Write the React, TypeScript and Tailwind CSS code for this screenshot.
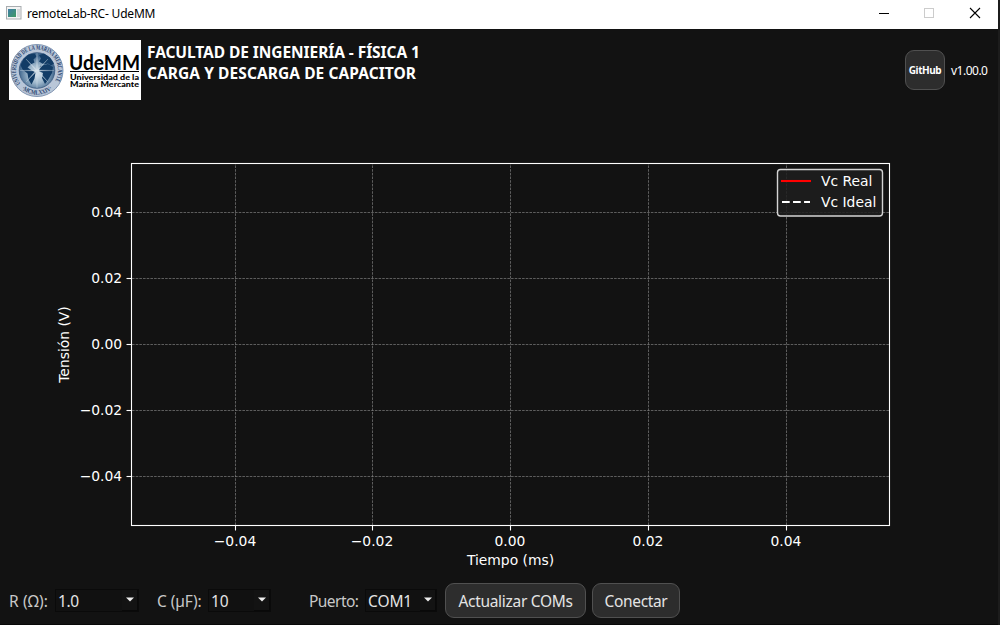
import React from "react";

const xTicks = [
  { at: 235.5, label: "−0.04" },
  { at: 372.5, label: "−0.02" },
  { at: 510.5, label: "0.00" },
  { at: 648.5, label: "0.02" },
  { at: 786.5, label: "0.04" },
];

const yTicks = [
  { at: 212.5, label: "0.04" },
  { at: 278.5, label: "0.02" },
  { at: 344.5, label: "0.00" },
  { at: 410.5, label: "−0.02" },
  { at: 476.5, label: "−0.04" },
];

function TitleBar() {
  return (
    <header className="flex h-[29px] w-[998px] shrink-0 items-center bg-white text-black">
      <svg width="16" height="14" viewBox="0 0 16 14" className="ml-[6px] -mt-[3px]">
        <defs>
          <linearGradient id="appIcon" x1="0" y1="0" x2="1" y2="1">
            <stop offset="0" stopColor="#3f7ea8" />
            <stop offset="1" stopColor="#3f9a62" />
          </linearGradient>
        </defs>
        <rect x="0.5" y="0.5" width="14.5" height="12.5" fill="#f4f4f4" stroke="#a9adb0" />
        <rect x="2" y="3" width="8" height="8" fill="url(#appIcon)" />
        <rect x="11" y="3" width="3" height="8" fill="#d5d8da" />
      </svg>
      <span className="ml-[5px] -mt-[1px] whitespace-nowrap text-[12px] leading-4 tracking-[-0.2px]">remoteLab-RC- UdeMM</span>
      <svg width="120" height="29" viewBox="0 0 120 29" className="ml-auto" fill="none" shapeRendering="crispEdges">
        <path d="M1 13.5h10" stroke="#000" />
        <rect x="46.5" y="8.5" width="9" height="9" stroke="#ccc" />
        <path d="M92 8l10 10M102 8l-10 10" stroke="#000" shapeRendering="auto" strokeWidth="1.1" />
      </svg>
    </header>
  );
}

function Logo() {
  return (
    <svg width="132" height="60" viewBox="0 0 132 60" className="shrink-0 bg-white">
      <defs>
        <radialGradient id="globe" cx="0.5" cy="0.6">
          <stop offset="0" stopColor="#dbe6ee" />
          <stop offset="0.5" stopColor="#9fb8cc" />
          <stop offset="1" stopColor="#3f668d" />
        </radialGradient>
        <path id="ringTop" d="M11.400 43.400A21 21 0 1 1 44.600 43.400" />
        <path id="ringBottom" d="M12 48.500A24 24 0 0 0 44 48.500" />
      </defs>
      <circle cx="28" cy="30.500" r="26" fill="#b9c6d8" stroke="#8296b2" strokeWidth="1" />
      <circle cx="28" cy="30.500" r="17.800" fill="url(#globe)" stroke="#38587e" strokeWidth="0.800" />
      <path d="M11.500 25l3-6 5-4.500 6-1 2 3-3 3 1 3-4 2-3 3 3 2 5 3-1 6-3 6-3-5-1-6-5-4zM30 15l5-1.500 6 4 4 6-3 2-3-2-4 1-5-3 2-3zM31 26l8-2 5 3-1 6-4 7-3 4-3-6 1-5-4-2z" fill="#123c66" />
      <path d="M28 13l.5 16.500L39 19l-9.500 11 15.500.5-15.500.5L39 42 28.500 31.500 28 48l-.5-16.500L17 42l9.500-11-15.500-.5 15.500-.5L17 19l10.500 10.500z" fill="#e0eaf1" stroke="#c0d0de" strokeWidth="0.300" opacity="0.800" />
      <g fontFamily="Liberation Serif, serif" fontWeight="700" fill="#243f6c">
        <text fontSize="6.500">
          <textPath href="#ringTop" textLength="90" lengthAdjust="spacingAndGlyphs">UNIVERSIDAD DE LA MARINA MERCANTE</textPath>
        </text>
        <text fontSize="6.500">
          <textPath href="#ringBottom" startOffset="1" textLength="33" lengthAdjust="spacingAndGlyphs">·MCMLXXIV·</textPath>
        </text>
      </g>
      <g fontFamily="Lato, sans-serif" fontWeight="700" fill="#000">
        <text x="60" y="29.800" fontSize="20" textLength="71" lengthAdjust="spacingAndGlyphs">UdeMM</text>
        <path d="M61 31.500h69" stroke="#000" />
        <text x="61" y="39.800" fontSize="7.700" fontWeight="900" textLength="69" lengthAdjust="spacingAndGlyphs">Universidad de la</text>
        <text x="61" y="46.600" fontSize="7.700" fontWeight="900" textLength="69" lengthAdjust="spacingAndGlyphs">Marina Mercante</text>
      </g>
    </svg>
  );
}

function Chart() {
  return (
    <svg width="998" height="473" viewBox="0 100 998 473" className="block shrink-0" fontFamily="DejaVu Sans, sans-serif" fontSize="13.89" fill="#fff">
      <g stroke="#808080" strokeWidth="0.69" strokeDasharray="2.57 1.11">
        {xTicks.map((t) => <path key={t.at} d={`M${t.at} 525V164`} />)}
        {yTicks.map((t) => <path key={t.at} d={`M132 ${t.at}H889`} />)}
      </g>
      <g stroke="#fff" fill="none" strokeWidth="1.1">
        {xTicks.map((t) => <path key={t.at} d={`M${t.at} 526v4.500`} />)}
        {yTicks.map((t) => <path key={t.at} d={`M126.500 ${t.at}h5`} />)}
        <rect x="131.500" y="163.500" width="758" height="362" />
      </g>
      {xTicks.map((t) => <text key={t.at} x={t.at - 0.5} y="546" textAnchor="middle">{t.label}</text>)}
      {yTicks.map((t) => <text key={t.at} x="122.200" y={t.at + 4.5} textAnchor="end">{t.label}</text>)}
      <text x="510.500" y="565" textAnchor="middle">Tiempo (ms)</text>
      <text transform="translate(69 344.500) rotate(-90)" textAnchor="middle">Tensión (V)</text>
      <rect x="777.500" y="169.500" width="105" height="46.500" rx="3" fill="#1e1e1e" fillOpacity="0.85" stroke="#d4d4d4" strokeWidth="1.400" />
      <path d="M781 181h30" stroke="#f00" strokeWidth="2.080" />
      <path d="M782 202h28" stroke="#fff" strokeWidth="2.080" strokeDasharray="7.700 3.330" />
      <text x="821" y="186">Vc Real</text>
      <text x="821" y="207">Vc Ideal</text>
    </svg>
  );
}

function Combo({ value, className }: { value: string; className: string }) {
  return (
    <div className={`flex h-[23px] shrink-0 items-center justify-between border border-[#0a0a0a] bg-[#111] pl-[2px] text-[#e4e4e4] ${className}`}>
      <span className="whitespace-nowrap pt-[2px]">{value}</span>
      <span className="flex h-[21px] w-[16px] shrink-0 items-center justify-center border-r border-b border-[#090909] bg-[#131313]">
        <svg width="8" height="5" viewBox="0 0 8 5" className="shrink-0"><path d="M0 .5h8L4 4.500z" fill="#eee" /></svg>
      </span>
    </div>
  );
}

export default function App() {
  return (
    <div className="flex h-[625px] w-[1000px] flex-col overflow-hidden bg-[#1c1c1c] font-['Noto_Sans','Open_Sans',sans-serif]">
      <TitleBar />
      <main className="flex h-[595px] w-[998px] flex-col bg-[#121212]">
        <section className="flex h-[71px] shrink-0 items-start pt-[11px] pl-[9px] text-white">
          <Logo />
          <h1 className="ml-[6px] mt-[2px] whitespace-nowrap text-[15.5px] font-bold leading-[21px]">
            <span className="block tracking-[-0.07px]">FACULTAD DE INGENIERÍA - FÍSICA 1</span>
            <span className="block tracking-[0.07px]">CARGA Y DESCARGA DE CAPACITOR</span>
          </h1>
          <button className="mt-[10px] ml-auto flex h-10 w-10 items-center justify-center rounded-[9px] border border-[#505050] bg-[#2d2d2d] text-[10px] font-bold tracking-[-0.45px]">GitHub</button>
          <span className="mt-[23px] ml-[6px] w-[47px] whitespace-nowrap text-[12px] leading-4 tracking-[-0.5px]">v1.00.0</span>
        </section>
        <Chart />
        <footer className="flex h-[51px] shrink-0 items-center pb-[3px] pl-[9px] pt-[6px] text-[15.5px] leading-5 text-[#c8c8c8]">
          <span className="w-[46px] shrink-0 whitespace-nowrap pt-[2px] tracking-[0.15px]">R (Ω):</span>
          <Combo value="1.0" className="w-[84px] tracking-[-0.4px]" />
          <span className="ml-[18px] w-[51px] shrink-0 whitespace-nowrap pt-[2px] tracking-[-0.1px]">C (µF):</span>
          <Combo value="10" className="w-[63px] tracking-[-0.1px]" />
          <span className="ml-[38px] w-[56px] shrink-0 whitespace-nowrap pt-[2px] tracking-[-0.55px]">Puerto:</span>
          <Combo value="COM1" className="w-[72px] tracking-[-0.1px]" />
          <button className="ml-2 h-[35px] w-[141px] shrink-0 whitespace-nowrap rounded-[9px] border border-[#505050] bg-[#2d2d2d] pt-[2px] tracking-[-0.3px] text-[#e4e4e4]">Actualizar COMs</button>
          <button className="ml-[6px] h-[35px] w-[88px] shrink-0 rounded-[9px] border border-[#505050] bg-[#2d2d2d] pt-[2px] tracking-[-0.35px] text-[#e4e4e4]">Conectar</button>
        </footer>
      </main>
      <div className="h-px w-[998px] bg-[#080808]" />
    </div>
  );
}
